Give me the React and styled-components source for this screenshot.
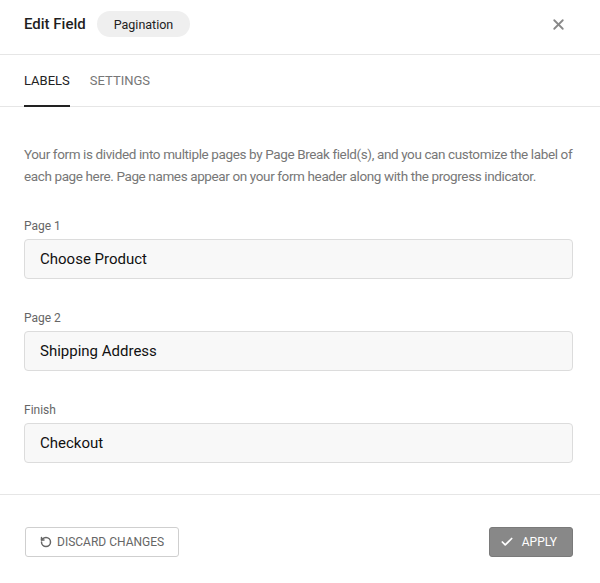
import React, { useState } from 'react'
import styled, { createGlobalStyle } from 'styled-components'
import { X, RotateCcw, Check } from 'lucide-react'

const GlobalStyle = createGlobalStyle`
  html, body {
    margin: 0;
    padding: 0;
    background: #fff;
    font-family: Roboto, "Liberation Sans", sans-serif;
  }
`

const pages = [
  { label: 'Page 1', value: 'Choose Product' },
  { label: 'Page 2', value: 'Shipping Address' },
  { label: 'Finish', value: 'Checkout' }
]

export default function App () {
  const [tab, setTab] = useState('labels')
  const [values, setValues] = useState(pages.map(p => p.value))

  return (
    <>
      <GlobalStyle />
      <StyledModal>
        <StyledHeader>
          <StyledTitle>Edit Field</StyledTitle>
          <StyledPill>Pagination</StyledPill>
          <StyledClose aria-label='Close'>
            <X size={17} strokeWidth={2.6} />
          </StyledClose>
        </StyledHeader>
        <StyledTabs>
          <StyledTab $active={tab === 'labels'} onClick={() => setTab('labels')}>Labels</StyledTab>
          <StyledTab $active={tab === 'settings'} onClick={() => setTab('settings')}>Settings</StyledTab>
        </StyledTabs>
        <StyledBody>
          <StyledDescription>
            Your form is divided into multiple pages by Page Break field(s), and you can customize the label of
            each page here. Page names appear on your form header along with the progress indicator.
          </StyledDescription>
          {pages.map((page, i) => (
            <StyledField key={page.label}>
              <StyledLabel>{page.label}</StyledLabel>
              <StyledInput
                value={values[i]}
                onChange={event => {
                  const next = [...values]
                  next[i] = event.target.value
                  setValues(next)
                }}
              />
            </StyledField>
          ))}
        </StyledBody>
        <StyledFooter>
          <StyledButton>
            <RotateCcw size={12} strokeWidth={3} />
            Discard Changes
          </StyledButton>
          <StyledButton $primary>
            <Check size={14} strokeWidth={3} />
            Apply
          </StyledButton>
        </StyledFooter>
      </StyledModal>
    </>
  )
}

const StyledModal = styled.div`
  width: 600px;
  height: 583px;
  display: flex;
  flex-direction: column;
  background: #fff;
  color: #222;
`

const StyledHeader = styled.div`
  height: 48px;
  display: flex;
  align-items: center;
  padding: 0 24px 6px 24px;
  border-bottom: 1px solid #e6e6e6;
`

const StyledTitle = styled.h1`
  margin: 0 11px 0 0;
  font-size: 15px;
  font-weight: 500;
  color: #1f1f1f;
`

const StyledPill = styled.span`
  display: inline-flex;
  align-items: center;
  height: 26px;
  padding: 0 17px;
  border-radius: 13px;
  background: #efefef;
  font-size: 12.5px;
  color: #222;
`

const StyledClose = styled.button`
  margin-left: auto;
  margin-right: 9px;
  border: none;
  background: none;
  padding: 0;
  display: flex;
  color: #888;
  cursor: pointer;
`

const StyledTabs = styled.div`
  height: 51px;
  display: flex;
  gap: 20px;
  padding: 0 24px;
  border-bottom: 1px solid #e6e6e6;
`

const StyledTab = styled.button`
  border: none;
  background: none;
  padding: 0;
  font-family: inherit;
  font-size: 13px;
  text-transform: uppercase;
  color: ${({ $active }) => ($active ? '#222' : '#777')};
  border-bottom: 2px solid ${({ $active }) => ($active ? '#222' : 'transparent')};
  margin-bottom: -1px;
  cursor: pointer;
`

const StyledBody = styled.div`
  padding: 36px 27px 31px 24px;
  display: flex;
  flex-direction: column;
  gap: 31px;
  border-bottom: 1px solid #e6e6e6;
`

const StyledDescription = styled.p`
  margin: 0 -8px 0 0;
  font-size: 13.5px;
  letter-spacing: -0.38px;
  line-height: 22px;
  color: #777;
`

const StyledField = styled.div`
  display: flex;
  flex-direction: column;
  gap: 5px;
`

const StyledLabel = styled.label`
  font-size: 12px;
  line-height: 16px;
  color: #666;
`

const StyledInput = styled.input`
  height: 40px;
  box-sizing: border-box;
  border: 1px solid #dcdcdc;
  border-radius: 4px;
  background: #f8f8f8;
  padding: 0 15px;
  font-family: inherit;
  font-size: 15px;
  color: #111;
  outline: none;
`

const StyledFooter = styled.div`
  flex: 1;
  display: flex;
  justify-content: space-between;
  align-items: flex-start;
  padding: 32px 27px 0 25px;
`

const StyledButton = styled.button`
  height: 30px;
  display: inline-flex;
  align-items: center;
  gap: ${({ $primary }) => ($primary ? '8px' : '5px')};
  padding: ${({ $primary }) => ($primary ? '0 15px 0 10px' : '0 14px')};
  border-radius: 3px;
  border: 1px solid ${({ $primary }) => ($primary ? '#7a7a7a' : '#cfcfcf')};
  background: ${({ $primary }) => ($primary ? '#888' : '#fff')};
  color: ${({ $primary }) => ($primary ? '#fff' : '#666')};
  font-family: inherit;
  font-size: 12px;
  text-transform: uppercase;
  cursor: pointer;
`
